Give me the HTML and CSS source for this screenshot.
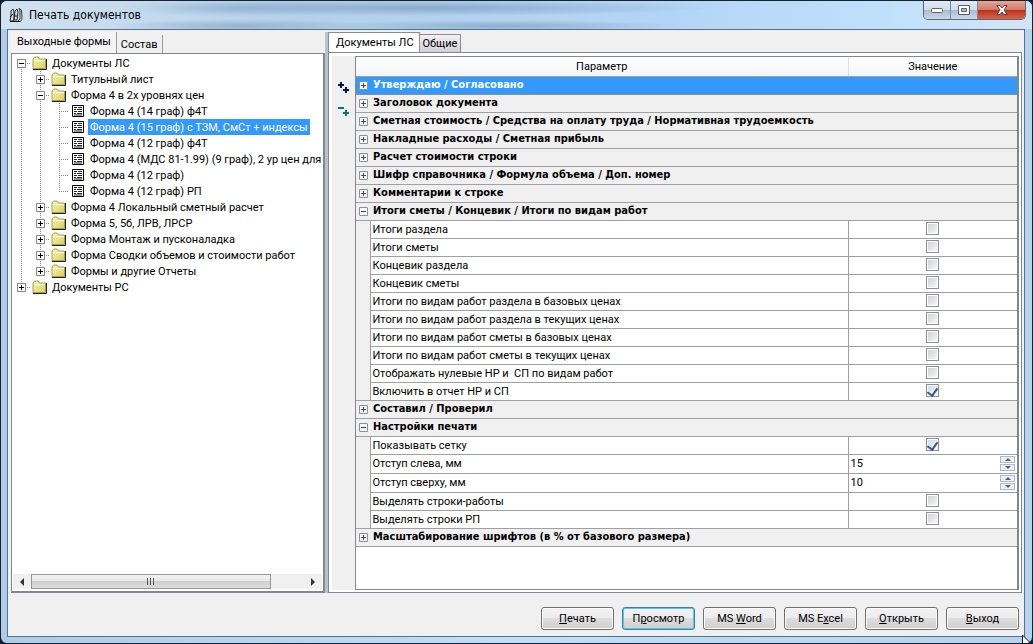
FILE: index.html
```
<!DOCTYPE html>
<html lang="ru">
<head>
<meta charset="utf-8">
<title>Печать документов</title>
<link rel="stylesheet" href="styles.css">
</head>
<body>
<svg class="defs" aria-hidden="true">
  <defs>
    <linearGradient id="paper" x1="0" y1="0" x2="1" y2="1"><stop offset="0" stop-color="#faf6b4"/><stop offset="1" stop-color="#d8cf62"/></linearGradient>
    <symbol id="folder" viewBox="0 0 16 14">
      <path d="M1 12.500V3L2.500 1H6L7.500 3H13.500V12.500Z" fill="url(#paper)" stroke="#a5a05a"/>
      <path d="M2 4.500H13" stroke="#fffde0" fill="none"/>
      <path d="M1 13.500H14.500V3" stroke="#222" fill="none"/>
    </symbol>
    <symbol id="sheet" viewBox="0 0 12 12">
      <path d="M.5 .5H11.500V11.500H.5Z" fill="#fff" stroke="#000"/>
      <path d="M2 2.500H5M6 2.500H10M2 4.500H4M5 4.500H10M2 6.500H5M6 6.500H10M2 8.500H4M5 8.500H10M2 10H10" stroke="#222" fill="none"/>
    </symbol>
    <symbol id="plus" viewBox="0 0 9 9"><path d="M.5 .5H8.500V8.500H.5Z" fill="#fff" stroke="#848484"/><path d="M2 4.500H7M4.500 2V7" stroke="#000"/></symbol>
    <symbol id="minus" viewBox="0 0 9 9"><path d="M.5 .5H8.500V8.500H.5Z" fill="#fff" stroke="#848484"/><path d="M2 4.500H7" stroke="#000"/></symbol>
    <symbol id="gplus" viewBox="0 0 9 9"><path d="M.5 .5H8.500V8.500H.5Z" fill="#f6f8fa" stroke="#8a929b"/><path d="M2 4.500H7M4.500 2V7" stroke="#34506e"/></symbol>
    <symbol id="gminus" viewBox="0 0 9 9"><path d="M.5 .5H8.500V8.500H.5Z" fill="#f6f8fa" stroke="#8a929b"/><path d="M2 4.500H7" stroke="#34506e"/></symbol>
  </defs>
</svg>
<div class="window">
  <header class="titlebar">
    <svg class="app-icon" viewBox="0 0 14 16" aria-hidden="true"><path d="M1 14L2 9V4L4 2L5 5V12L4 14ZM5 13L6 4L8 2L9 5L8 13Z" fill="#d9dfe6" stroke="#222"/><path d="M9 14L11 12V4L10 1.500L12.500 3L13 11L11.500 14.500Z" fill="#f4f4f4" stroke="#333"/><path d="M1 10L4 7M5.500 9H8M1 14.500H11" stroke="#111"/></svg>
    <h1 class="title">Печать документов</h1>
    <div class="caption">
      <button class="cap" aria-label="Свернуть"><svg width="12" height="5" viewBox="0 0 12 5"><rect x=".5" y=".5" width="11" height="4" rx="1" fill="#fff" stroke="#5a6373"/></svg></button>
      <button class="cap" aria-label="Развернуть"><svg width="12" height="10" viewBox="0 0 12 10"><path d="M.5 .5H11.500V9.500H.5Z" fill="#fff" stroke="#5a6373"/><path d="M3.500 3.500H8.500V6.500H3.500Z" fill="#a9bdd2" stroke="#5a6373"/></svg></button>
      <button class="cap close" aria-label="Закрыть"><svg width="12" height="10" viewBox="0 0 12 10"><path d="M.8 .5H4L6 3L8 .5H11.200L8 5L11.200 9.500H8L6 7L4 9.500H.8L4 5Z" fill="#fff" stroke="#6b3a3a"/></svg></button>
    </div>
  </header>
  <main class="client">
    <div class="panes">
      <section class="left">
        <div class="tabs" role="tablist">
          <button class="tab flat on" role="tab" aria-selected="true">Выходные формы</button>
          <button class="tab flat" role="tab" aria-selected="false">Состав</button>
        </div>
        <div class="treebox">
          <ul class="tree" role="tree">
            <li class="node" role="treeitem"><i class="joint first"><svg><use href="#minus"/></svg></i><svg class="folder"><use href="#folder"/></svg><span class="name">Документы ЛС</span></li>
            <li class="node" role="treeitem"><i class="rail"></i><i class="joint"><svg><use href="#plus"/></svg></i><svg class="folder"><use href="#folder"/></svg><span class="name">Титульный лист</span></li>
            <li class="node" role="treeitem"><i class="rail"></i><i class="joint"><svg><use href="#minus"/></svg></i><svg class="folder"><use href="#folder"/></svg><span class="name">Форма 4 в 2х уровнях цен</span></li>
            <li class="node" role="treeitem"><i class="rail"></i><i class="rail"></i><i class="joint"></i><svg class="sheet"><use href="#sheet"/></svg><span class="name">Форма 4 (14 граф) ф4Т</span></li>
            <li class="node" role="treeitem" aria-selected="true"><i class="rail"></i><i class="rail"></i><i class="joint"></i><svg class="sheet"><use href="#sheet"/></svg><span class="name picked">Форма 4 (15 граф) с ТЗМ, СмСт + индексы</span></li>
            <li class="node" role="treeitem"><i class="rail"></i><i class="rail"></i><i class="joint"></i><svg class="sheet"><use href="#sheet"/></svg><span class="name">Форма 4 (12 граф) ф4Т</span></li>
            <li class="node" role="treeitem"><i class="rail"></i><i class="rail"></i><i class="joint"></i><svg class="sheet"><use href="#sheet"/></svg><span class="name">Форма 4 (МДС 81-1.99) (9 граф), 2 ур цен для</span></li>
            <li class="node" role="treeitem"><i class="rail"></i><i class="rail"></i><i class="joint"></i><svg class="sheet"><use href="#sheet"/></svg><span class="name">Форма 4 (12 граф)</span></li>
            <li class="node" role="treeitem"><i class="rail"></i><i class="rail"></i><i class="joint last"></i><svg class="sheet"><use href="#sheet"/></svg><span class="name">Форма 4 (12 граф) РП</span></li>
            <li class="node" role="treeitem"><i class="rail"></i><i class="joint"><svg><use href="#plus"/></svg></i><svg class="folder"><use href="#folder"/></svg><span class="name">Форма 4 Локальный сметный расчет</span></li>
            <li class="node" role="treeitem"><i class="rail"></i><i class="joint"><svg><use href="#plus"/></svg></i><svg class="folder"><use href="#folder"/></svg><span class="name">Форма 5, 5б, ЛРВ, ЛРСР</span></li>
            <li class="node" role="treeitem"><i class="rail"></i><i class="joint"><svg><use href="#plus"/></svg></i><svg class="folder"><use href="#folder"/></svg><span class="name">Форма Монтаж и пусконаладка</span></li>
            <li class="node" role="treeitem"><i class="rail"></i><i class="joint"><svg><use href="#plus"/></svg></i><svg class="folder"><use href="#folder"/></svg><span class="name">Форма Сводки объемов и стоимости работ</span></li>
            <li class="node" role="treeitem"><i class="rail"></i><i class="joint last"><svg><use href="#plus"/></svg></i><svg class="folder"><use href="#folder"/></svg><span class="name">Формы и другие Отчеты</span></li>
            <li class="node" role="treeitem"><i class="joint last"><svg><use href="#plus"/></svg></i><svg class="folder"><use href="#folder"/></svg><span class="name">Документы РС</span></li>
          </ul>
          <div class="scroll">
            <button class="arrow" aria-label="Влево"><svg width="4" height="8" viewBox="0 0 4 8"><path d="M4 0V8L0 4Z" fill="#333"/></svg></button>
            <div class="track"><div class="thumb"><svg width="8" height="7" viewBox="0 0 8 7"><path d="M.5 0V7M3.500 0V7M6.500 0V7" stroke="#555"/></svg></div></div>
            <button class="arrow" aria-label="Вправо"><svg width="4" height="8" viewBox="0 0 4 8"><path d="M0 0V8L4 4Z" fill="#333"/></svg></button>
          </div>
        </div>
      </section>
      <div class="splitter"></div>
      <section class="right">
        <div class="tabs raised" role="tablist">
          <button class="tab page on" role="tab" aria-selected="true">Документы ЛС</button>
          <button class="tab page" role="tab" aria-selected="false">Общие</button>
        </div>
        <div class="sheetbox">
          <div class="tools">
            <button class="tool" aria-label="Развернуть все"><svg width="12" height="12" viewBox="0 0 12 12"><path d="M0 3H6M3 0V6M5 8H11M8 5V11" stroke="#101050" stroke-width="2"/></svg></button>
            <button class="tool" aria-label="Свернуть все"><svg width="12" height="12" viewBox="0 0 12 12"><path d="M0 2H6M5 7H11M8 4V10" stroke="#0c7474" stroke-width="2"/></svg></button>
          </div>
          <div class="gridbox">
            <table class="grid">
              <colgroup><col class="c-gutter"><col><col class="c-value"></colgroup>
              <thead><tr><th colspan="2">Параметр</th><th>Значение</th></tr></thead>
              <tbody>
                <tr class="group active"><td colspan="3"><button class="fold"><svg><use href="#gplus"/></svg>Утверждаю / Согласовано</button></td></tr>
                <tr class="group"><td colspan="3"><button class="fold"><svg><use href="#gplus"/></svg>Заголовок документа</button></td></tr>
                <tr class="group"><td colspan="3"><button class="fold"><svg><use href="#gplus"/></svg>Сметная стоимость / Средства на оплату труда / Нормативная трудоемкость</button></td></tr>
                <tr class="group"><td colspan="3"><button class="fold"><svg><use href="#gplus"/></svg>Накладные расходы / Сметная прибыль</button></td></tr>
                <tr class="group"><td colspan="3"><button class="fold"><svg><use href="#gplus"/></svg>Расчет стоимости строки</button></td></tr>
                <tr class="group"><td colspan="3"><button class="fold"><svg><use href="#gplus"/></svg>Шифр справочника / Формула объема / Доп. номер</button></td></tr>
                <tr class="group"><td colspan="3"><button class="fold"><svg><use href="#gplus"/></svg>Комментарии к строке</button></td></tr>
                <tr class="group"><td colspan="3"><button class="fold"><svg><use href="#gminus"/></svg>Итоги сметы / Концевик / Итоги по видам работ</button></td></tr>
                <tr><td class="gutter" rowspan="10"></td><td><label for="p1">Итоги раздела</label></td><td class="value"><input class="tick" type="checkbox" id="p1"></td></tr>
                <tr><td><label for="p2">Итоги сметы</label></td><td class="value"><input class="tick" type="checkbox" id="p2"></td></tr>
                <tr><td><label for="p3">Концевик раздела</label></td><td class="value"><input class="tick" type="checkbox" id="p3"></td></tr>
                <tr><td><label for="p4">Концевик сметы</label></td><td class="value"><input class="tick" type="checkbox" id="p4"></td></tr>
                <tr><td><label for="p5">Итоги по видам работ раздела в базовых ценах</label></td><td class="value"><input class="tick" type="checkbox" id="p5"></td></tr>
                <tr><td><label for="p6">Итоги по видам работ раздела в текущих ценах</label></td><td class="value"><input class="tick" type="checkbox" id="p6"></td></tr>
                <tr><td><label for="p7">Итоги по видам работ сметы в базовых ценах</label></td><td class="value"><input class="tick" type="checkbox" id="p7"></td></tr>
                <tr><td><label for="p8">Итоги по видам работ сметы в текущих ценах</label></td><td class="value"><input class="tick" type="checkbox" id="p8"></td></tr>
                <tr><td><label for="p9">Отображать нулевые НР и&nbsp; СП по видам работ</label></td><td class="value"><input class="tick" type="checkbox" id="p9"></td></tr>
                <tr><td><label for="p10">Включить в отчет НР и СП</label></td><td class="value"><input class="tick" type="checkbox" id="p10" checked></td></tr>
                <tr class="group"><td colspan="3"><button class="fold"><svg><use href="#gplus"/></svg>Составил / Проверил</button></td></tr>
                <tr class="group"><td colspan="3"><button class="fold"><svg><use href="#gminus"/></svg>Настройки печати</button></td></tr>
                <tr><td class="gutter" rowspan="5"></td><td><label for="q1">Показывать сетку</label></td><td class="value"><input class="tick" type="checkbox" id="q1" checked></td></tr>
                <tr class="tall"><td><label for="q2">Отступ слева, мм</label></td><td class="value"><div class="spin"><input class="num" type="text" id="q2" value="15"><span class="steps"><button class="step" aria-label="Больше"><svg width="6" height="3" viewBox="0 0 6 3"><path d="M0 3L3 0L6 3Z" fill="#555f80"/></svg></button><button class="step" aria-label="Меньше"><svg width="6" height="3" viewBox="0 0 6 3"><path d="M0 0H6L3 3Z" fill="#555f80"/></svg></button></span></div></td></tr>
                <tr class="tall"><td><label for="q3">Отступ сверху, мм</label></td><td class="value"><div class="spin"><input class="num" type="text" id="q3" value="10"><span class="steps"><button class="step" aria-label="Больше"><svg width="6" height="3" viewBox="0 0 6 3"><path d="M0 3L3 0L6 3Z" fill="#555f80"/></svg></button><button class="step" aria-label="Меньше"><svg width="6" height="3" viewBox="0 0 6 3"><path d="M0 0H6L3 3Z" fill="#555f80"/></svg></button></span></div></td></tr>
                <tr><td><label for="q4">Выделять строки-работы</label></td><td class="value"><input class="tick" type="checkbox" id="q4"></td></tr>
                <tr><td><label for="q5">Выделять строки РП</label></td><td class="value"><input class="tick" type="checkbox" id="q5"></td></tr>
                <tr class="group"><td colspan="3"><button class="fold"><svg><use href="#gplus"/></svg>Масштабирование шрифтов (в % от базового размера)</button></td></tr>
              </tbody>
            </table>
          </div>
        </div>
      </section>
    </div>
    <footer class="actions">
      <button class="push"><u>П</u>ечать</button>
      <button class="push default">П<u>р</u>осмотр</button>
      <button class="push">MS <u>W</u>ord</button>
      <button class="push">MS E<u>x</u>cel</button>
      <button class="push"><u>О</u>ткрыть</button>
      <button class="push"><u>В</u>ыход</button>
    </footer>
  </main>
  <svg class="pointer" width="11" height="9" viewBox="0 0 11 9" aria-hidden="true"><path d="M.5 0V9H9.500Z" fill="#fff" stroke="#111"/></svg>
</div>
</body>
</html>
```

FILE: styles.css
```
* { box-sizing: border-box; }

body {
  margin: 0;
  background: #10202e;
  color: #000;
  font: 11px/16px Roboto, "DejaVu Sans Condensed", sans-serif;
}

button {
  margin: 0;
  padding: 0;
  border: 0;
  background: none;
  color: inherit;
  font: inherit;
}

svg { display: block; }

.defs { position: absolute; width: 0; height: 0; }

.window {
  position: relative;
  display: flex;
  flex-direction: column;
  min-height: 100vh;
  padding: 0 7px 6px 6px;
  border: 1px solid #16222f;
  border-radius: 7px;
  background: linear-gradient(90deg, #aecbe8, #bfe0f8 50%, #b5d3ee);
  overflow: hidden;
}

.titlebar {
  display: flex;
  align-items: flex-start;
  height: 28px;
  margin: 0 -7px 0 -6px;
  padding: 0 6px 0 8px;
  background:
    radial-gradient(ellipse 120px 9px at 240px 7px, #86a9ca90, transparent),
    radial-gradient(ellipse 280px 8px at 430px 7px, #6f93b8a0, transparent),
    radial-gradient(ellipse 130px 7px at 240px 25px, #7f9fc0a0, transparent),
    radial-gradient(ellipse 180px 6px at 500px 25px, #7799bca0, transparent),
    linear-gradient(90deg, #d2e2f1, #b4d0ea 30%, #b3d5f5 65%, #bfe0fb 85%, #d3e5f5);
}

.app-icon { width: 14px; height: 16px; margin-top: 6px; }

.title {
  flex: 1;
  margin: 6px 0 0 6px;
  font: 12px/16px "DejaVu Sans Condensed", sans-serif;
}

.caption {
  display: flex;
  border: 1px solid #5b6b7d;
  border-top: 0;
  border-radius: 0 0 5px 5px;
  overflow: hidden;
}

.cap {
  display: flex;
  align-items: center;
  justify-content: center;
  width: 27px;
  height: 18px;
  border-right: 1px solid #7a8a9b;
  background: linear-gradient(#e3ecf5, #cfdbe7 50%, #a9bccd 50%, #c8d9e8);
}

.cap.close {
  width: 47px;
  border-right: 0;
  background: linear-gradient(#e6a797, #d27a66 50%, #b9301c 50%, #d8654a);
}

.client {
  flex: 1;
  display: flex;
  flex-direction: column;
  border: 1px solid #53708c;
  background: #f0f0f0;
}

.panes {
  flex: 1;
  display: flex;
  padding: 2px 2px 0 3px;
}

.left { display: flex; flex-direction: column; width: 314px; }

.splitter { width: 3px; background: #b9c3cd; }

.right { flex: 1; display: flex; flex-direction: column; }

.tabs {
  display: flex;
  align-items: flex-end;
  height: 21px;
}

.raised { height: 20px; }

.tab.flat {
  height: 18px;
  padding: 1px 4px 0;
  border-right: 1px solid #9a9a9a;
}

.tab.flat.on { height: 21px; padding: 0 5px 1px 6px; background: #f4f4f4; }

.tab.page {
  height: 18px;
  padding: 1px 3px 0;
  border: 1px solid #8b8b92;
  border-left: 0;
  border-bottom: 0;
  background: linear-gradient(#f2f0f3, #d3cfd8);
}

.tab.page.on {
  height: 20px;
  padding: 0 5px 0 7px;
  border-left: 1px solid #8b8b92;
  background: #fff;
}

.treebox {
  flex: 1;
  display: flex;
  flex-direction: column;
  border: 1px solid #828790;
  border-width: 1px 2px 2px 1px;
  background: #fff;
}

.tree {
  flex: 1;
  margin: 0;
  padding: 1px 0 0;
  list-style: none;
}

.node { display: flex; align-items: center; height: 16px; overflow: hidden; }

.rail, .joint {
  flex: none;
  display: flex;
  align-items: center;
  width: 19px;
  height: 16px;
  padding-left: 5px;
  background: repeating-linear-gradient(#888 0 1px, #fff 1px 2px) 9px 0 / 1px 16px no-repeat;
}

.joint {
  background:
    repeating-linear-gradient(#888 0 1px, #fff 1px 2px) 9px 0 / 1px 16px no-repeat,
    repeating-linear-gradient(90deg, #888 0 1px, #fff 1px 2px) 9px 8px / 10px 1px no-repeat;
}

.joint.last { background-size: 1px 8px, 10px 1px; }

.joint.first { background-position: 9px 8px, 9px 8px; background-size: 1px 8px, 10px 1px; }

.joint svg { width: 9px; height: 9px; }

.folder { flex: none; width: 16px; height: 14px; margin: 0 2px 0 1px; }

.sheet { flex: none; width: 12px; height: 12px; margin: 0 4px 0 3px; }

.name { height: 16px; padding: 1px 2px 0; white-space: nowrap; }

.picked { background: #3399ff; color: #fff; }

.scroll {
  display: flex;
  height: 15px;
  margin: 0 1px 2px;
  background: #f0f0f0;
}

.arrow {
  display: flex;
  align-items: center;
  justify-content: center;
  width: 18px;
}

.track { flex: 1; }

.thumb {
  display: flex;
  align-items: center;
  justify-content: center;
  width: 88%;
  height: 15px;
  border: 1px solid #979797;
  background: linear-gradient(#f4f4f4, #e6e6e6 50%, #cfcfcf 50%, #dcdcdc);
}

.sheetbox {
  flex: 1;
  display: flex;
  padding: 3px 2px 2px 3px;
  border: 1px solid #828790;
  background: #fff;
}

.tools {
  display: flex;
  flex-direction: column;
  gap: 12px;
  width: 23px;
  padding: 26px 0 0 6px;
  background: #f0f0f0;
}

.gridbox {
  flex: 1;
  border: 1px solid #828790;
  border-right-width: 2px;
}

.grid { width: 100%; border-collapse: collapse; table-layout: fixed; }

.c-gutter { width: 14px; }

.c-value { width: 169px; }

.grid th {
  height: 19px;
  padding: 2px 0 0;
  border-bottom: 1px solid #a0a0a0;
  background: linear-gradient(#fff, #f4f5f7);
  font-weight: normal;
}

.grid th + th { border-left: 1px solid #dcdfe3; }

.grid td {
  height: 18px;
  padding: 0 0 0 2px;
  border-bottom: 1px solid #a0a0a0;
}

.grid .tall td { height: 19px; }

.grid td + td, .grid .gutter + td, .grid .value { border-left: 1px solid #a0a0a0; }

.grid .gutter { background: #f0f0f0; border-right: 1px solid #a0a0a0; }

.grid .group td { background: #f0f0f0; }

.grid .active td { background: #3399ff; border-color: #a08a60; color: #fff; }

.grid label { display: block; padding-top: 1px; white-space: nowrap; }

.grid .tall label { padding-top: 0; }

.fold {
  display: flex;
  align-items: center;
  gap: 5px;
  padding-left: 1px;
  font-family: "DejaVu Sans Condensed", sans-serif;
  font-weight: bold;
  white-space: nowrap;
}

.fold svg { width: 9px; height: 9px; }

.grid .value { padding: 0 2px 1px; }

.tick {
  appearance: none;
  display: flex;
  justify-content: center;
  width: 13px;
  height: 13px;
  margin: 0 auto;
  padding: 1px;
  border: 1px solid #8e8f8f;
  background: linear-gradient(135deg, #cfd3d6, #f6f6f6) content-box;
}

.tick:checked { background: linear-gradient(135deg, #cfdcec, #f4f8fc) content-box; }

.tick:checked::before {
  content: "";
  width: 5px;
  height: 8px;
  border: solid #35568e;
  border-width: 0 2px 2px 0;
  transform: rotate(35deg);
}

.spin { display: flex; align-items: center; justify-content: space-between; }

.num {
  width: 80px;
  height: 16px;
  padding: 1px 0 0;
  border: 0;
  background: none;
  font: inherit;
}

.steps { display: flex; flex-direction: column; gap: 1px; }

.step {
  display: flex;
  align-items: center;
  justify-content: center;
  width: 15px;
  height: 7px;
  border: 1px solid #b4b8c4;
  background: #eef0f5;
}

.actions {
  display: flex;
  justify-content: flex-end;
  gap: 8px;
  padding: 14px 5px 6px;
}

.push {
  width: 73px;
  height: 23px;
  border: 1px solid #707070;
  border-radius: 3px;
  background: linear-gradient(#f3f3f3, #ebebeb 50%, #dddddd 50%, #cfcfcf);
  box-shadow: inset 0 0 0 1px #fbfbfb;
}

.push.default {
  border-color: #3c7fb1;
  box-shadow: inset 0 0 0 1px #58c6ee;
}

.pointer { position: absolute; right: -1px; bottom: -1px; }
```
